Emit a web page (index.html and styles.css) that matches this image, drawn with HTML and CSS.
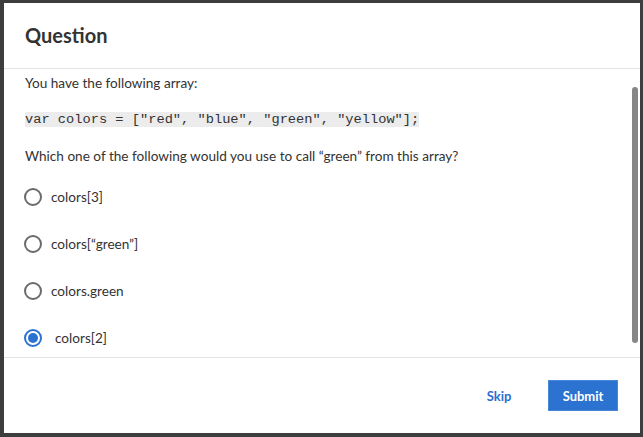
FILE: index.html
```html
<!DOCTYPE html>
<html lang="en">
<head>
<meta charset="utf-8">
<title>Question</title>
<link rel="stylesheet" href="styles.css">
</head>
<body>
<div class="modal">
  <div class="modal-header"><h2 class="title">Question</h2></div>
  <div class="modal-body">
    <div class="content">
      <p class="text">You have the following array:</p>
      <div class="code-row"><code class="code">var colors = ["red", "blue", "green", "yellow"];</code></div>
      <p class="text question">Which one of the following would you use to call “green” from this array?</p>
      <div class="options">
        <label class="option"><span class="radio"></span><span class="label">colors[3]</span></label>
        <label class="option"><span class="radio"></span><span class="label">colors[“green”]</span></label>
        <label class="option"><span class="radio"></span><span class="label">colors.green</span></label>
        <label class="option selected"><span class="radio"></span><span class="label wide">colors[2]</span></label>
      </div>
    </div>
    <div class="scroll-thumb"></div>
  </div>
  <div class="modal-footer">
    <button class="btn btn-skip">Skip</button>
    <button class="btn btn-submit">Submit</button>
  </div>
</div>
</body>
</html>
```
FILE: styles.css
```css
html, body {
  margin: 0;
  padding: 0;
}
body {
  background: #3d3d3d;
  width: 643px;
  height: 437px;
  overflow: hidden;
  font-family: Lato, "Open Sans", sans-serif;
  color: #333;
}
.modal {
  margin: 3px 0 0 4px;
  width: 636px;
  height: 430px;
  background: #fff;
  display: flex;
  flex-direction: column;
}
.modal-header {
  height: 66px;
  border-bottom: 1px solid #e3e3e3;
  display: flex;
  align-items: center;
  padding-left: 21px;
  box-sizing: border-box;
  flex: none;
  padding-bottom: 1px;
}
.title {
  margin: 0;
  font-size: 20px;
  font-weight: 700;
  color: #333;
}
.modal-body {
  position: relative;
  height: 289px;
  flex: none;
  overflow: hidden;
  border-bottom: 1px solid #e3e3e3;
  box-sizing: border-box;
}
.content {
  padding: 4px 21px 0 21px;
}
.text {
  margin: 0;
  font-size: 13.6px;
  line-height: 20px;
  color: #333;
}
.code-row {
  margin-top: 19px;
  display: flex;
}
.code {
  background: #ececec;
  font-family: "Liberation Mono", monospace;
  font-size: 13.7px;
  line-height: 15px;
  color: #333;
  white-space: pre;
}
.question {
  margin-top: 19px;
}
.options {
  margin-top: 21px;
  display: flex;
  flex-direction: column;
  gap: 27px;
}
.option {
  display: flex;
  align-items: center;
  height: 20px;
  font-size: 13.6px;
  color: #333;
}
.radio {
  width: 18px;
  height: 18px;
  box-sizing: border-box;
  border: 2px solid #6b6b6b;
  border-radius: 50%;
  margin-left: -1px;
  margin-right: 9px;
  flex: none;
  display: flex;
  align-items: center;
  justify-content: center;
}
.option.selected .radio {
  border-color: #2b72d1;
}
.option.selected .radio::after {
  content: "";
  width: 10px;
  height: 10px;
  border-radius: 50%;
  background: #2b72d1;
}
.label.wide {
  margin-left: 4px;
}
.scroll-thumb {
  position: absolute;
  right: 2px;
  top: 18px;
  width: 6px;
  height: 256px;
  border-radius: 3px;
  background: #878787;
}
.modal-footer {
  flex: 1;
  display: flex;
  align-items: center;
  justify-content: flex-end;
  padding-right: 22px;
  gap: 14px;
}
.btn {
  font-family: Lato, "Open Sans", sans-serif;
  font-size: 13px;
  font-weight: 700;
  border: none;
  height: 31px;
  width: 70px;
  cursor: pointer;
}
.btn-skip {
  background: transparent;
  color: #2b6fcb;
}
.btn-submit {
  background: #2b72d1;
  color: #fff;
  border: 1px solid #4a86d8;
}
```
